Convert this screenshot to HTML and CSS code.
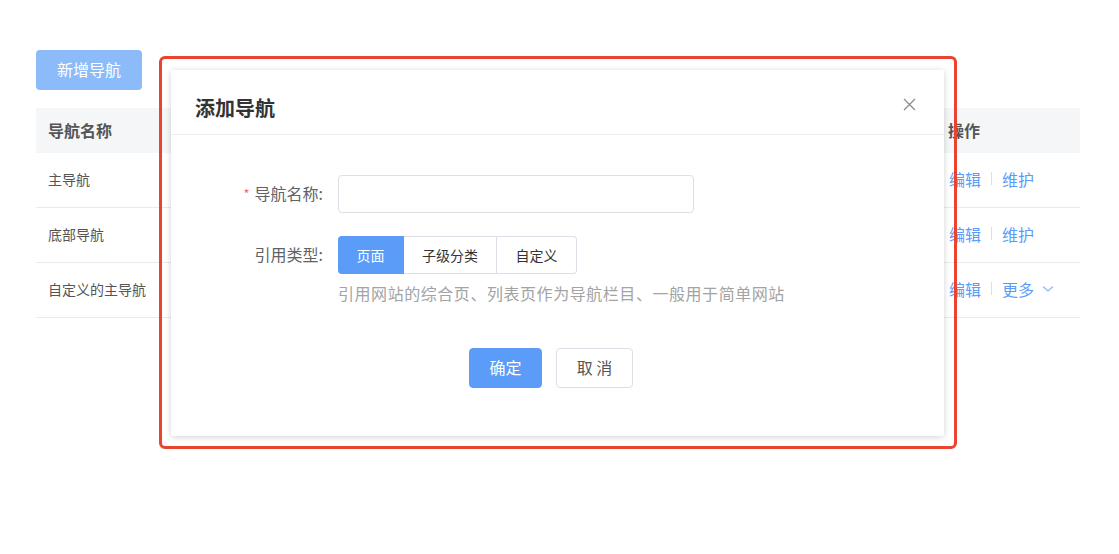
FILE: index.html
```html
<!DOCTYPE html>
<html lang="zh-CN">
<head>
<meta charset="utf-8">
<title>导航管理</title>
<link rel="stylesheet" href="styles.css">
</head>
<body>
<div class="page">
  <button class="btn-add">新增导航</button>
  <div class="table">
    <div class="tr th">
      <div class="td">导航名称</div>
      <div class="td">操作</div>
    </div>
    <div class="tr">
      <div class="td">主导航</div>
      <div class="td ops"><a>编辑</a><span class="sep"></span><a>维护</a></div>
    </div>
    <div class="tr">
      <div class="td">底部导航</div>
      <div class="td ops"><a>编辑</a><span class="sep"></span><a>维护</a></div>
    </div>
    <div class="tr">
      <div class="td">自定义的主导航</div>
      <div class="td ops"><a>编辑</a><span class="sep"></span><a class="more">更多<svg width="12" height="8" viewBox="0 0 12 8"><path d="M1 1.5 L6 6 L11 1.5" fill="none" stroke="#8db8f6" stroke-width="1.2"/></svg></a></div>
    </div>
  </div>

  <div class="highlight">
    <div class="modal">
      <div class="modal-header">
        <span class="modal-title">添加导航</span>
        <svg class="close" width="13" height="13" viewBox="0 0 13 13"><path d="M1 1 L12 12 M12 1 L1 12" stroke="#8a8a8a" stroke-width="1.2"/></svg>
      </div>
      <div class="modal-body">
        <div class="form-row">
          <label class="form-label"><span class="req">*</span>导航名称:</label>
          <div class="input"></div>
        </div>
        <div class="form-row row2">
          <label class="form-label">引用类型:</label>
          <div>
            <div class="seg">
              <span class="seg-item active">页面</span>
              <span class="seg-item w2">子级分类</span>
              <span class="seg-item w3">自定义</span>
            </div>
            <div class="hint">引用网站的综合页、列表页作为导航栏目、一般用于简单网站</div>
          </div>
        </div>
        <div class="footer">
          <button class="btn-ok">确定</button>
          <button class="btn-cancel">取 消</button>
        </div>
      </div>
    </div>
  </div>
</div>
</body>
</html>
```

FILE: styles.css
```css
* { box-sizing: border-box; }
html, body { margin: 0; padding: 0; background: #fff; }
body {
  font-family: "Noto Sans CJK SC", "Noto Sans", sans-serif;
  color: #555;
  width: 1119px;
  height: 554px;
  overflow: hidden;
}
.page {
  position: relative;
  padding: 50px 39px 0 36px;
}
.btn-add {
  display: block;
  width: 106px;
  height: 40px;
  border: none;
  border-radius: 4px;
  background: #8cbbf9;
  color: #fff;
  font-family: inherit;
  font-size: 16px;
  padding: 0 0 2px;
}
.table { margin-top: 18px; }
.tr {
  display: grid;
  grid-template-columns: 1fr 144px;
  height: 55px;
  padding-bottom: 3px;
  border-bottom: 1px solid #e9eaf0;
  align-items: center;
  font-size: 14px;
  color: #555;
}
.tr.th {
  height: 45px;
  padding-bottom: 2px;
  background: #f5f6f7;
  border-bottom: none;
  font-size: 16px;
  font-weight: 700;
  color: #555;
}
.td { padding-left: 12px; }
.ops {
  display: flex;
  align-items: center;
  font-size: 16px;
  padding-left: 13px;
}
.ops a { color: #5a9cf8; display: inline-flex; align-items: center; }
.sep {
  display: inline-block;
  width: 1px;
  height: 13px;
  background: #dcdfe6;
  margin: 0 10px;
}
.more svg { margin-left: 8px; }

.highlight {
  position: absolute;
  left: 159px;
  top: 56px;
  width: 798px;
  height: 393px;
  border: 3px solid #ea4330;
  border-radius: 6px;
  padding: 11px 10px 10px 9px;
}
.modal {
  position: relative;
  background: #fff;
  height: 100%;
  border-radius: 2px;
  box-shadow: 0 1px 6px rgba(0,0,0,0.18);
}
.modal-header {
  position: relative;
  padding: 27px 24px 15px;
  border-bottom: 1px solid #ebedf0;
}
.modal-title {
  display: block;
  font-size: 20px;
  line-height: 22px;
  font-weight: 700;
  color: #333;
}
.close {
  position: absolute;
  right: 28px;
  top: 28px;
}
.modal-body { padding-top: 40px; }
.form-row {
  display: flex;
  align-items: flex-start;
}
.row2 { margin-top: 23px; }
.form-label {
  display: flex;
  align-items: center;
  justify-content: flex-end;
  width: 167px;
  height: 38px;
  padding: 0 15px 2px 0;
  font-size: 16px;
  color: #606266;
}
.req { color: #f56c6c; font-size: 13px; margin-right: 5px; }
.input {
  width: 356px;
  height: 38px;
  border: 1px solid #dcdfe6;
  border-radius: 4px;
}
.seg { display: flex; }
.seg-item {
  display: flex;
  align-items: center;
  justify-content: center;
  width: 66px;
  height: 38px;
  padding-bottom: 1px;
  font-size: 14px;
  color: #333;
  border: 1px solid #dcdfe6;
  border-left: none;
}
.seg-item.active {
  background: #5a9cf8;
  border-color: #5a9cf8;
  color: #fff;
  border-radius: 4px 0 0 4px;
}
.seg-item.w2 { width: 93px; }
.seg-item.w3 { width: 80px; border-radius: 0 4px 4px 0; }
.hint {
  margin-top: 8px;
  font-size: 16px;
  line-height: 22px;
  letter-spacing: 0.55px;
  color: #a3a3a3;
  white-space: nowrap;
}
.footer {
  display: flex;
  gap: 14px;
  padding-left: 298px;
  margin-top: 44px;
}
.footer button {
  height: 40px;
  border-radius: 4px;
  font-family: inherit;
  font-size: 16px;
  padding: 0 0 2px;
}
.btn-ok {
  width: 73px;
  background: #5a9cf8;
  border: 1px solid #5a9cf8;
  color: #fff;
}
.btn-cancel {
  width: 77px;
  background: #fff;
  border: 1px solid #dcdfe6;
  color: #555;
}
```
